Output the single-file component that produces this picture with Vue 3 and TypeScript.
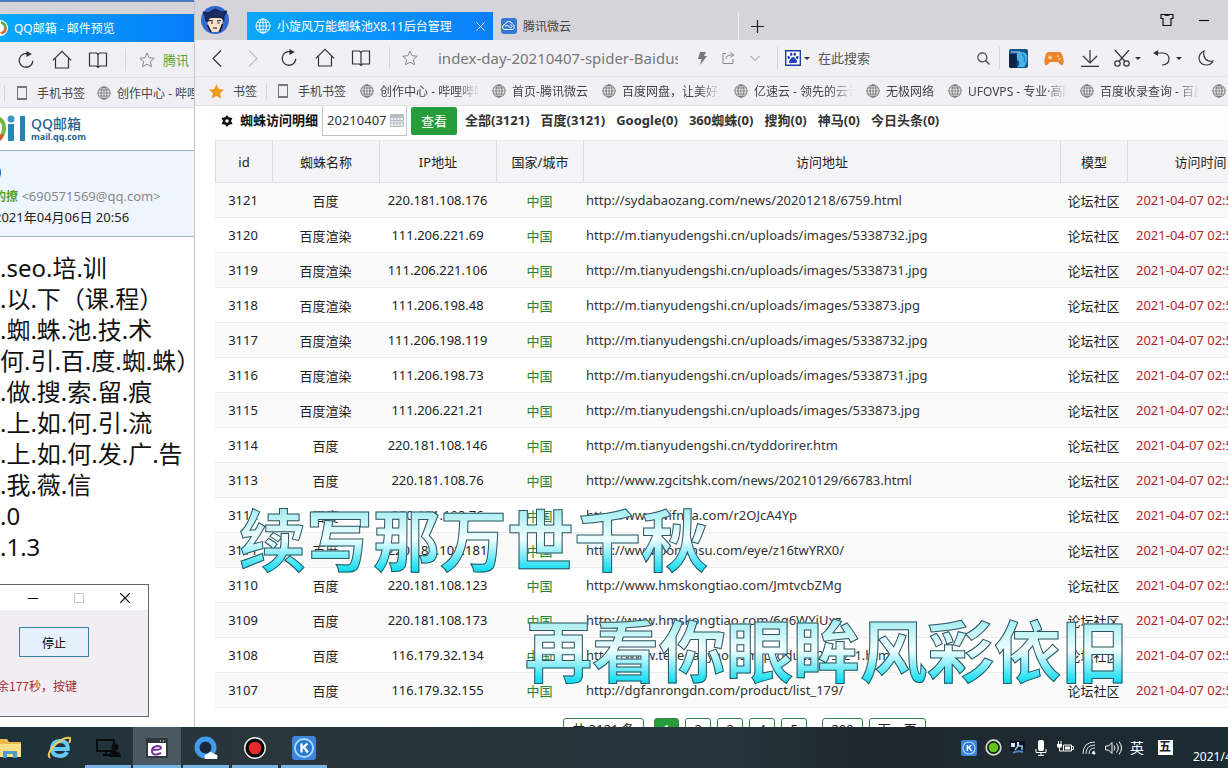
<script setup lang="ts">
import { ref } from 'vue'

interface Visit {
  id: number
  spider: string
  ip: string
  url: string
}

const visits: Visit[] = [
  { id: 3121, spider: '百度', ip: '220.181.108.176', url: 'http://sydabaozang.com/news/20201218/6759.html' },
  { id: 3120, spider: '百度渲染', ip: '111.206.221.69', url: 'http://m.tianyudengshi.cn/uploads/images/5338732.jpg' },
  { id: 3119, spider: '百度渲染', ip: '111.206.221.106', url: 'http://m.tianyudengshi.cn/uploads/images/5338731.jpg' },
  { id: 3118, spider: '百度渲染', ip: '111.206.198.48', url: 'http://m.tianyudengshi.cn/uploads/images/533873.jpg' },
  { id: 3117, spider: '百度渲染', ip: '111.206.198.119', url: 'http://m.tianyudengshi.cn/uploads/images/5338732.jpg' },
  { id: 3116, spider: '百度渲染', ip: '111.206.198.73', url: 'http://m.tianyudengshi.cn/uploads/images/5338731.jpg' },
  { id: 3115, spider: '百度渲染', ip: '111.206.221.21', url: 'http://m.tianyudengshi.cn/uploads/images/533873.jpg' },
  { id: 3114, spider: '百度', ip: '220.181.108.146', url: 'http://m.tianyudengshi.cn/tyddorirer.htm' },
  { id: 3113, spider: '百度', ip: '220.181.108.76', url: 'http://www.zgcitshk.com/news/20210129/66783.html' },
  { id: 3112, spider: '百度', ip: '220.181.108.76', url: 'http://www.wifnaa.com/r2OJcA4Yp' },
  { id: 3111, spider: '百度', ip: '220.181.108.181', url: 'http://www.bonunsu.com/eye/z16twYRX0/' },
  { id: 3110, spider: '百度', ip: '220.181.108.123', url: 'http://www.hmskongtiao.com/JmtvcbZMg' },
  { id: 3109, spider: '百度', ip: '220.181.108.173', url: 'http://www.hmskongtiao.com/6q6WYiUxz' },
  { id: 3108, spider: '百度', ip: '116.179.32.134', url: 'http://www.tejiegaoyao.com/product/213-2-1.html' },
  { id: 3107, spider: '百度', ip: '116.179.32.155', url: 'http://dgfanrongdn.com/product/list_179/' },
]

const filters = ['全部(3121)', '百度(3121)', 'Google(0)', '360蜘蛛(0)', '搜狗(0)', '神马(0)', '今日头条(0)']
const bookmarks = ['创作中心 - 哔哩哔哩', '首页-腾讯微云', '百度网盘，让美好生活', '亿速云 - 领先的云计算', '无极网络', 'UFOVPS - 专业·高防', '百度收录查询 - 百度', '站长']
const mailLines = ['.seo.培.训', '.以.下（课.程）', '.蜘.蛛.池.技.术', '何.引.百.度.蜘.蛛）', '.做.搜.索.留.痕', '.上.如.何.引.流', '.上.如.何.发.广.告', '.我.薇.信', '.0', '.1.3']
const pages = ['2', '3', '4', '5']
const day = ref('20210407')
</script>

<template>
  <div class="desktop">
    <svg class="defs" aria-hidden="true">
      <symbol id="i-globe" viewBox="0 0 16 16"><g fill="none" stroke="currentColor"><circle cx="8" cy="8" r="7" /><ellipse cx="8" cy="8" rx="3.4" ry="7" /><path d="M8 1v14M1 8h14M2 4.6h12M2 11.4h12" stroke-width=".8" /></g></symbol>
      <symbol id="i-reload" viewBox="0 0 20 20"><path d="M11.5 3A7.6 7.6 0 1 0 17.6 11" fill="none" stroke="currentColor" stroke-width="1.4" /><path d="M10.5 0l6 3.2-6 3.4z" fill="currentColor" /></symbol>
      <symbol id="i-home" viewBox="0 0 20 20"><path d="M.8 10.4L10 1.4l9.200 9M3.500 8.500V18h13V8.500" fill="none" stroke="currentColor" stroke-width="1.200" /></symbol>
      <symbol id="i-book" viewBox="0 0 20 20"><path d="M10 4.500L8.500 3H1.500v13h7L10 17.500l1.500-1.500h7V3h-7zM10 4.500v13" fill="none" stroke="currentColor" stroke-width="1.200" /></symbol>
      <symbol id="i-star" viewBox="0 0 16 16"><path d="M8 1l2.100 4.700 5.100.6-3.800 3.400 1.100 5L8 12.200l-4.500 2.500 1.100-5L.8 6.300l5.100-.6z" /></symbol>
      <symbol id="i-k" viewBox="0 0 24 24"><rect width="24" height="24" rx="3" fill="#3d84dc" /><circle cx="12" cy="12" r="9" fill="#2b76d2" stroke="#a8dcff" stroke-width="1.800" /><path d="M9.500 7.500v9M15.500 7.500L10 12.300M11.800 11l4 5.500" fill="none" stroke="#fff" stroke-width="2.300" /></symbol>
    </svg>

    <div class="workspace">
      <section class="mail">
        <div class="mail-strip"></div>
        <div class="mail-tab">
          <svg width="9" height="16" viewBox="0 0 9 16"><circle cx="0" cy="8" r="8" fill="#fff" /><path d="M1 1a7 7 0 0 1 6 7H4a4 4 0 0 0-3-4z" fill="#59b14c" /><path d="M4 8h3a7 7 0 0 1-5 6.500L0 12a4 4 0 0 0 4-4z" fill="#e3662c" /></svg>
          <span>QQ邮箱 - 邮件预览</span>
        </div>
        <div class="mail-tools">
          <button class="tool" aria-label="刷新"><svg width="18" height="18"><use href="#i-reload" /></svg></button>
          <button class="tool" aria-label="主页"><svg width="20" height="20"><use href="#i-home" /></svg></button>
          <button class="tool" aria-label="阅读"><svg width="20" height="20"><use href="#i-book" /></svg></button>
          <i class="rule mail-rule"></i>
          <svg class="outline-star" width="16" height="16"><use href="#i-star" /></svg>
          <span class="green-text">腾讯</span>
        </div>
        <div class="mail-marks">
          <i class="rule short"></i>
          <a href="#" class="mark"><i class="phone"></i><span>手机书签</span></a>
          <a href="#" class="mark"><svg class="globe" width="14" height="14"><use href="#i-globe" /></svg><span>创作中心 - 哔哩</span></a>
        </div>
        <div class="mail-logo">
          <svg width="26" height="29" viewBox="0 0 26 29"><path d="M0 2q6 3 6 11T0 25v-5q2-3 2-7T0 7z" fill="#74b83f" /><path d="M0 20l4-1q-1 5-4 7z" fill="#d9562b" /><circle cx="11" cy="4" r="3.500" fill="#3999c4" /><path d="M8 9h6v17H8z" fill="#2886b4" /><path d="M20 1h5v25h-5z" fill="#2783b1" /></svg>
          <div class="logo-words"><strong>QQ邮箱</strong><small>mail.qq.com</small></div>
        </div>
        <div class="mail-head">
          <h2>0</h2>
          <p class="from"><b>的撩</b> &lt;690571569@qq.com&gt;</p>
          <p>2021年04月06日 20:56</p>
        </div>
        <div class="mail-body"><p v-for="(line, i) in mailLines" :key="i">{{ line }}</p></div>
        <div class="dialog">
          <div class="dialog-bar">
            <svg width="10" height="10" viewBox="0 0 10 10"><path d="M0 5.500h10" stroke="#000" /></svg>
            <svg width="10" height="10" viewBox="0 0 10 10"><path d="M.5.5h9v9h-9z" fill="none" stroke="#c5c5c5" /></svg>
            <svg width="10" height="10" viewBox="0 0 10 10"><path d="M0 0l10 10M10 0L0 10" stroke="#000" stroke-width="1.200" /></svg>
          </div>
          <button class="stop">停止</button>
          <p>余177秒，按键</p>
        </div>
      </section>

      <main class="browser">
        <header class="tabs">
          <svg class="avatar" width="28" height="28" viewBox="0 0 28 28"><circle cx="14" cy="14" r="14" fill="#3467cf" /><path d="M6 12h16l-1 9-4 5h-6l-4-5z" fill="#f7dfcd" /><path d="M2 6l5 1 7-4 7 3 5-1-3 5v5l-2-3-7-1-6 1-1 4-2-1-1-5z" fill="#1d2b62" stroke="#0d132d" stroke-width=".8" /><path d="M8 14.500l4 .5M16 15l4-.5M10 17h2M16.500 17h2M12 22h4" stroke="#17131a" stroke-width="1.200" /><path d="M6.500 19l3.500 7M21.500 18l-3 8" stroke="#10121c" stroke-width="1.500" /></svg>
          <div class="tab active">
            <svg width="16" height="16"><use href="#i-globe" /></svg>
            <span>小旋风万能蜘蛛池X8.11后台管理</span>
            <button aria-label="关闭标签"><svg width="9" height="9" viewBox="0 0 9 9"><path d="M.5.5l8 8M8.500.5l-8 8" stroke="#fff" /></svg></button>
          </div>
          <div class="tab">
            <svg width="16" height="16" viewBox="0 0 16 16"><rect width="16" height="16" rx="3" fill="#3578d3" /><path d="M4 11.500a2.500 2.500 0 0 1 0-5 4 4 0 0 1 7.500-.5 3 3 0 0 1 0 5.500zM4 8c3-1 4 0 4.500 1.500A1.500 1.500 0 1 0 9 7" fill="none" stroke="#fff" /></svg>
            <span>腾讯微云</span>
          </div>
          <button class="tool new-tab" aria-label="新标签"><svg width="13" height="13" viewBox="0 0 13 13"><path d="M6.500 0v13M0 6.500h13" stroke="#222" stroke-width="1.200" /></svg></button>
          <div class="window-keys">
            <svg width="14" height="14" viewBox="0 0 14 14"><path d="M1 1.500h3q3 2 6 0h3v4h-2v7H3v-7H1zM4 1.500h6" fill="none" stroke="#111" stroke-width="1.200" /></svg>
            <svg width="10" height="14" viewBox="0 0 10 14"><path d="M0 7.500h10" stroke="#111" stroke-width="1.200" /></svg>
          </div>
        </header>

        <nav class="toolbar">
          <button class="tool" aria-label="后退"><svg width="10" height="17" viewBox="0 0 10 17"><path d="M9 .5L1 8.500l8 8" fill="none" stroke="currentColor" stroke-width="1.200" /></svg></button>
          <button class="tool faint" aria-label="前进"><svg width="10" height="17" viewBox="0 0 10 17"><path d="M1 .5l8 8-8 8" fill="none" stroke="currentColor" stroke-width="1.200" /></svg></button>
          <button class="tool" aria-label="刷新"><svg width="18" height="18"><use href="#i-reload" /></svg></button>
          <button class="tool" aria-label="主页"><svg width="20" height="20"><use href="#i-home" /></svg></button>
          <button class="tool" aria-label="阅读"><svg width="20" height="20"><use href="#i-book" /></svg></button>
          <i class="rule bar-rule"></i>
          <div class="address">
            <svg class="outline-star" width="16" height="16"><use href="#i-star" /></svg>
            <span class="location">index-day-20210407-spider-Baiduspider</span>
            <svg width="9" height="13" viewBox="0 0 9 13"><path d="M2 0h6L6 4h3L2 13l1.500-6H0z" fill="#777" /></svg>
            <svg width="13" height="12" viewBox="0 0 13 12"><path d="M4 1.500H1v10h10V7M4 7q0-4 5-4h2M8.500.5L12 3 8.500 5.500" fill="none" stroke="#888" /></svg>
            <svg width="10" height="7" viewBox="0 0 10 7"><path d="M.5 1L5 5.500 9.500 1" fill="none" stroke="#888" /></svg>
          </div>
          <div class="search">
            <svg width="16" height="16" viewBox="0 0 16 16"><path d="M.7.7h14.600v14.600H.7z" fill="#fff" stroke="#1d3c9e" stroke-width="1.400" /><g fill="#1b43c0"><ellipse cx="3.700" cy="7.500" rx="1.200" ry="1.700" /><ellipse cx="6.200" cy="4.300" rx="1.200" ry="1.700" /><ellipse cx="9.700" cy="4.300" rx="1.200" ry="1.700" /><ellipse cx="12.300" cy="7.500" rx="1.200" ry="1.700" /><path d="M8 7q1.500 0 2.500 2 2 1.500 1.500 3-.8 1.500-2.500 1h-3Q4 13.500 4 12q0-1.500 1.500-3Q6.500 7 8 7z" /></g></svg>
            <i class="caret"></i>
            <input aria-label="搜索" placeholder="在此搜索" />
            <svg width="13" height="13" viewBox="0 0 13 13"><path d="M8.500 8.500l4 4" stroke="#444" stroke-width="1.200" /><circle cx="5.300" cy="5.300" r="4.500" fill="none" stroke="#444" stroke-width="1.200" /></svg>
          </div>
          <button class="tool" aria-label="图片"><svg width="19" height="19" viewBox="0 0 19 19"><rect width="19" height="19" rx="2" fill="#10538c" /><path d="M0 5h8v14H2q-2 0-2-2z" fill="#0b2443" /><path d="M8 4q7-3 10 2 1 8-3 12H8q3-2 2-6-3 0-2-8z" fill="#48b4e8" /><path d="M13 5q4 3 2 8" fill="none" stroke="#1d7fc0" stroke-width="1.500" /><path d="M2 3h9" stroke="#bde5f7" /></svg></button>
          <button class="tool" aria-label="游戏"><svg width="20" height="15" viewBox="0 0 20 15"><path d="M5 1h10q3 0 4 5 1.500 6-.5 8-2 1-4.500-3H6q-2.500 4-4.500 3-2-2-.5-8 1-5 4-5z" fill="#ef8430" /><path d="M4 6.500h4M6 4.500v4M13 5h2M14.500 8h2" stroke="#ffe0a4" stroke-width="1.300" /></svg></button>
          <button class="tool" aria-label="下载"><svg width="18" height="17" viewBox="0 0 18 17"><path d="M9 0v13M2 6l7 7 7-7M0 16.300h18" fill="none" stroke="currentColor" stroke-width="1.200" /></svg></button>
          <button class="tool menu" aria-label="截图"><svg width="16" height="17" viewBox="0 0 16 17"><g fill="none" stroke="currentColor" stroke-width="1.200"><path d="M1 0l10 11.500M15 0L5 11.500" /><circle cx="3.500" cy="13.500" r="2.700" /><circle cx="12.500" cy="13.500" r="2.700" /></g></svg><i class="caret"></i></button>
          <button class="tool menu wide" aria-label="恢复"><svg width="17" height="16" viewBox="0 0 17 16"><path d="M3 3h7q6 .5 6 6t-7 6" fill="none" stroke="currentColor" stroke-width="1.200" /><path d="M5 0v6L0 3z" fill="currentColor" /></svg><i class="caret"></i></button>
          <button class="tool" aria-label="夜间"><svg width="16" height="16" viewBox="0 0 16 16"><path d="M6 1Q1 3.500 1 8.500 2 15 8.500 15q4.500 0 6.500-4Q10 12 7.500 9T6 1z" fill="none" stroke="currentColor" stroke-width="1.200" /></svg></button>
        </nav>

        <nav class="bookmarks">
          <a href="#" class="mark first"><svg width="17" height="17" fill="#f09a20"><use href="#i-star" /></svg><span>书签</span></a>
          <i class="rule short"></i>
          <a href="#" class="mark"><i class="phone"></i><span>手机书签</span></a>
          <a v-for="name in bookmarks" :key="name" href="#" class="mark"><svg class="globe" width="14" height="14"><use href="#i-globe" /></svg><span class="fade">{{ name }}</span></a>
        </nav>

        <section class="page">
          <form class="filter" @submit.prevent>
            <svg width="12" height="12" viewBox="0 0 12 12"><path d="M6 0l1.700 2.300L11.500 3 10 6l1.500 3-3.800.7L6 12 4.300 9.700.5 9 2 6 .5 3l3.800-.7z" fill="#111" /><circle cx="6" cy="6" r="1.800" fill="#fff" /></svg>
            <label for="day">蜘蛛访问明细</label>
            <div class="date">
              <input id="day" v-model="day" />
              <svg width="14" height="13" viewBox="0 0 14 13"><rect width="14" height="13" rx="1" fill="#b8bdc6" /><path d="M1 4h12v8H1z" fill="#eef0f3" /><path d="M1 6.500h12M1 9h12M4 4v8M7 4v8M10 4v8" stroke="#b5bac4" /></svg>
            </div>
            <button class="view">查看</button>
            <a v-for="item in filters" :key="item" href="#">{{ item }}</a>
          </form>
          <div class="sheet">
            <table>
              <colgroup><col class="c-id" /><col class="c-name" /><col class="c-ip" /><col class="c-area" /><col /><col class="c-type" /><col class="c-time" /></colgroup>
              <thead><tr><th>id</th><th>蜘蛛名称</th><th>IP地址</th><th>国家/城市</th><th>访问地址</th><th>模型</th><th>访问时间</th></tr></thead>
              <tbody>
                <tr v-for="v in visits" :key="v.id">
                  <td>{{ v.id }}</td><td>{{ v.spider }}</td><td>{{ v.ip }}</td><td class="area">中国</td><td class="url">{{ v.url }}</td><td class="kind">论坛社区</td><td class="time">2021-04-07 02:56:11</td>
                </tr>
              </tbody>
            </table>
            <nav class="pager">
              <span class="total">共 3121 条</span><a href="#" class="current">1</a><a v-for="p in pages" :key="p" href="#">{{ p }}</a><a href="#" class="last">209</a><a href="#">下一页</a>
            </nav>
          </div>
        </section>
      </main>

      <p class="lyric one">续写那万世千秋</p>
      <p class="lyric two">再看你眼眸风彩依旧</p>
    </div>

    <footer class="taskbar">
      <button class="app" aria-label="文件夹"><svg width="24" height="22" viewBox="0 0 24 22"><path d="M0 2h9l2 3h12v15H0z" fill="#e9b94b" /><path d="M0 7h23v13H0z" fill="#ffdf86" /><path d="M5 21v-7h14v7h-4v-4H9v4z" fill="#4f9bc4" /></svg></button>
      <button class="app" aria-label="IE"><svg width="24" height="24" viewBox="0 0 24 24"><path d="M5.500 13h15.200q.3-8-7.700-8-8 .4-8 8 .3 7 8 7 5 0 7-4" fill="none" stroke="#68c9f3" stroke-width="4" /><path d="M3 22Q-1 18 8 9T23 2q1 2-1 5" fill="none" stroke="#f2cf54" stroke-width="2" /></svg></button>
      <button class="app running" aria-label="远程"><svg width="25" height="20" viewBox="0 0 25 20"><path d="M1 2h17v11H1zM7 17h7M10 13v4" fill="none" stroke="#080b0d" stroke-width="2" /><circle cx="19" cy="9" r="3.500" fill="#080b0d" /><path d="M13 19q0-6 6-6t6 6z" fill="#080b0d" /></svg></button>
      <button class="app running chosen" aria-label="易语言"><svg width="22" height="20" viewBox="0 0 22 20"><path d="M1 1h20v18H1z" fill="#fff" stroke="#31383c" stroke-width="2" /><path d="M1 1h20v4H1z" fill="#31383c" /><path d="M14 3h1M17 3h1" stroke="#fff" /><path d="M7 11.500q7 1 8-1.500 0-2-4-2-5 1-5 5 0 4 5 3.500l4-1.500" fill="none" stroke="#783391" stroke-width="2" /></svg></button>
      <button class="app running" aria-label="QQ浏览器"><svg width="24" height="24" viewBox="0 0 24 24"><circle cx="11.500" cy="11.500" r="8.500" fill="#18283f" stroke="#419ced" stroke-width="5" /><path d="M11 23q-2-5 3-5 2-4 6 0 5 0 3 5z" fill="#fff" /></svg></button>
      <button class="app running" aria-label="录制"><svg width="24" height="24" viewBox="0 0 24 24"><circle cx="12" cy="12" r="10.300" fill="#0b0708" stroke="#eee" stroke-width="1.400" /><circle cx="12" cy="12" r="6.300" fill="#e92b2c" /></svg></button>
      <button class="app running" aria-label="酷狗"><svg width="24" height="24"><use href="#i-k" /></svg></button>
      <div class="tray">
        <span><svg width="16" height="16"><use href="#i-k" /></svg></span>
        <span><svg width="17" height="17" viewBox="0 0 17 17"><circle cx="8.500" cy="8.500" r="7.300" fill="#102010" stroke="#d7dbd7" stroke-width="1.700" /><circle cx="8.500" cy="8.500" r="4.800" fill="#61c51d" /></svg></span>
        <span><svg width="15" height="14" viewBox="0 0 15 14"><path d="M0 0h15v10H0z" fill="#0c1524" /><path d="M1 2h4v4H1zM7 1h2v5H7z" fill="#dce8f4" /><path d="M5 9l3-4h4v4" stroke="#9cc5e8" fill="none" stroke-width="1.500" /><path d="M3 12q5-3 10-1" stroke="#4887c6" stroke-width="2" fill="none" /></svg></span>
        <span><svg width="12" height="16" viewBox="0 0 12 16"><rect x="3" width="6" height="11" rx="2" fill="#fff" /><path d="M1 9v3.500h10V9M6 12v3.500M3 15.300h6" fill="none" stroke="#fff" /></svg></span>
        <span><svg width="17" height="13" viewBox="0 0 17 13"><path d="M6.500 4h8v6h-8zM15 5.500h1.500v3H15" fill="none" stroke="#fff" /><path d="M8 5.500h5v3H8zM0 3h5v2q0 2-2.500 2T0 5zM1 0h1v3H1zM3.500 0h1v3h-1z" fill="#fff" /><path d="M2.500 7v3H6" fill="none" stroke="#fff" /></svg></span>
        <span><svg width="14" height="14" viewBox="0 0 14 14"><path d="M1 13Q1 1 13 1M4 13q0-9 9-9M7 13q0-6 6-6M10 13q0-3 3-3" fill="none" stroke="#dce3e6" /><circle cx="12" cy="12.300" r="1.300" fill="#fff" /></svg></span>
        <span><svg width="17" height="14" viewBox="0 0 17 14"><path d="M.5 5h3L7 1.500v11L3.500 9h-3zM9 4.500q2 2.500 0 5M11.500 2.500q3.500 4.500 0 9M14 .5q5 6.500 0 13" fill="none" stroke="#fff" /></svg></span>
        <span>英</span>
        <span class="wubi"><b>五</b></span>
        <time>2021/4/7</time>
      </div>
    </footer>
  </div>
</template>

<style>
html, body { margin: 0; overflow: hidden; }
</style>

<style scoped>
* { box-sizing: border-box; }
.desktop { height: 100vh; display: flex; flex-direction: column; overflow: hidden; font-family: "Noto Sans", "Noto Sans CJK SC", sans-serif; font-size: 13px; color: #222; background: #fff; }
.defs { position: absolute; width: 0; height: 0; }
p, h2 { margin: 0; }
svg { display: block; flex: none; }
a { color: inherit; text-decoration: none; }
button { font: inherit; color: inherit; border: 0; padding: 0; background: none; }
input { font: inherit; color: inherit; border: 0; padding: 0; background: none; outline: 0; min-width: 0; }
.workspace { position: relative; flex: 1; min-height: 0; display: flex; overflow: hidden; }

.mail { position: relative; flex: 0 0 194px; overflow: hidden; white-space: nowrap; }
.mail-strip { height: 14px; background: #d4d4da; border-top: 2px solid #4779b3; }
.mail-tab { height: 28px; display: flex; align-items: center; gap: 5px; color: #fff; font-size: 12px; background: linear-gradient(90deg, #05a9fb, #087cfa); }
.mail-tools { height: 36px; padding-left: 8px; display: flex; align-items: center; background: #f0f0f4; border-bottom: 1px solid #e2e2e6; }
.rule { flex: none; width: 1px; height: 22px; background: #d3d3d8; }
.rule.short { height: 16px; }
.mail-rule { margin: 0 13px 0 9px; }
.green-text { color: #56a832; margin-left: 8px; }
.mail-marks { height: 30px; padding-left: 4px; display: flex; align-items: center; gap: 12px; background: #f0f0f4; border-bottom: 1px solid #dedee4; font-size: 12px; color: #444; }
.mail-logo { height: 42px; display: flex; align-items: center; gap: 5px; }
.logo-words { display: flex; flex-direction: column; color: #1c6692; }
.logo-words strong { font-size: 14px; line-height: 15px; font-weight: 500; }
.logo-words small { font-size: 9px; line-height: 11px; font-weight: 700; }
.mail-head { height: 87px; padding-top: 7px; background: #eef5fd; border-top: 1px solid #9fb3c6; border-bottom: 1px solid #9fb3c6; }
.mail-head h2 { margin-left: -9px; font-size: 18px; line-height: 28px; color: #111; }
.mail-head p { margin-left: -6px; line-height: 20px; font-size: 13px; color: #222; }
.mail-head .from { color: #888; }
.mail-head b { color: #58a025; font-size: 12px; }
.mail-body { padding-top: 15px; font-size: 24px; line-height: 31px; color: #111; }
.dialog { position: absolute; left: -1px; top: 584px; width: 150px; height: 133px; border: 1px solid #666; background: #f0eef2; font-family: "Noto Sans CJK SC", sans-serif; font-size: 12px; }
.dialog-bar { height: 25px; padding-right: 18px; display: flex; justify-content: flex-end; align-items: center; gap: 36px; background: #fff; }
.stop { display: block; width: 70px; height: 30px; margin: 17px 0 19px 19px; border: 1px solid #3c7f9f; background: #e5f1fc; color: #000; }
.dialog p { line-height: 20px; margin-left: -3px; color: #a82b30; }

.browser { flex: 1; min-width: 0; overflow: hidden; display: flex; flex-direction: column; border-left: 1px solid #c4c4ca; background: #fff; }
.tabs { flex: none; height: 40px; padding-left: 6px; display: flex; align-items: flex-end; background: #d5d4da; font-size: 12px; color: #444; }
.avatar { margin: 0 18px 6px 0; }
.tab { flex: none; width: 246px; height: 28px; padding: 0 8px; display: flex; align-items: center; gap: 6px; border-right: 1px solid #efeff2; }
.tab.active { color: #fff; border: 0; background: linear-gradient(90deg, #0aa8fa, #0a7ff8); }
.tab button { margin-left: auto; }
.new-tab { height: 28px; }
.window-keys { margin: 0 19px 13px auto; display: flex; gap: 25px; }
.toolbar { flex: none; height: 37px; padding: 0 4px; display: flex; align-items: center; background: #f1f1f5; border-bottom: 1px solid #e3e3e8; }
.tool { flex: none; width: 36px; display: flex; align-items: center; justify-content: center; color: #333; }
.faint { color: #bcbcc0; }
.menu { width: 38px; gap: 5px; }
.menu.wide { width: 42px; gap: 6px; }
.caret { flex: none; border: 3px solid transparent; border-top-color: #333; border-bottom: 0; }
.bar-rule { margin: 0 12px 0 10px; }
.address { flex: 1; min-width: 0; display: flex; align-items: center; gap: 15px; padding-right: 17px; border-right: 1px solid #d3d3d8; }
.outline-star { fill: none; stroke: #888; }
.location { flex: 1; min-width: 0; margin: 0 5px; overflow: hidden; white-space: nowrap; font-size: 15px; line-height: 22px; color: #777; }
.search { flex: 0 0 222px; min-width: 0; height: 22px; padding: 0 9px 0 7px; display: flex; align-items: center; gap: 3px; border-right: 1px solid #d3d3d8; }
.search input { flex: 1; width: 0; margin-left: 5px; }
.search input::placeholder { color: #555; opacity: 1; }
.bookmarks { flex: none; height: 29px; padding-left: 13px; display: flex; align-items: center; gap: 14px; background: #f1f1f5; border-bottom: 1px solid #e0e0e5; font-size: 12px; color: #444; overflow: hidden; }
.bookmarks .short { margin-right: -3px; }
.mark { flex: none; display: flex; align-items: center; gap: 6px; white-space: nowrap; }
.first { gap: 8px; margin-right: -5px; }
.phone { width: 10px; height: 14px; margin-right: 4px; border: 1px solid #777; border-top-width: 2px; border-bottom-width: 2px; }
.globe { color: #666; }
.fade { max-width: 98px; overflow: hidden; mask-image: linear-gradient(90deg, #000 76px, transparent 100px); }

.page { flex: 1; min-height: 0; padding-left: 20px; overflow: hidden; }
.filter { height: 34px; padding: 0 0 5px 6px; display: flex; align-items: center; gap: 8px; font-weight: 700; white-space: nowrap; color: #333; background: #fdfdfd; }
.filter label { margin-right: -4px; margin-left: -1px; color: #111; }
.filter label, .filter a { padding-bottom: 2px; }
.filter a + a { margin-left: 3px; }
.date { width: 85px; height: 30px; padding: 0 2px 0 4px; display: flex; align-items: center; border: 1px solid #c5c5c5; border-top: 0; background: #fff; font-weight: 400; }
.date input { flex: 1; width: 60px; }
.view { width: 46px; height: 28px; margin-left: -4px; border-radius: 2px; color: #fff; background: #279c3b; font-weight: 400; }
.sheet { width: calc(100% + 46px); }
table { width: 100%; table-layout: fixed; border-collapse: separate; border-spacing: 0; }
.c-id { width: 58px; }
.c-name { width: 107px; }
.c-ip { width: 117px; }
.c-area { width: 87px; }
.c-type { width: 67px; }
.c-time { width: 146px; }
th { height: 43px; padding: 0; font-weight: 400; color: #222; background: #f4f4f6; border-right: 1px solid #dcdcdf; border-bottom: 1px solid #e2e2e5; border-top: 1px solid #ececef; }
th:first-child { border-left: 1px solid #dcdcdf; }
td { height: 35px; padding: 0 2px 0 0; text-align: center; white-space: nowrap; border-bottom: 1px solid #ececee; }
tbody tr:nth-child(odd) { background: #fafafb; }
.area { color: #23862b; }
.url { text-align: left; padding-left: 2px; color: #333; }
.time { text-align: left; padding-left: 8px; color: #b0252c; }
.pager { padding-top: 10px; display: flex; justify-content: center; gap: 6px; }
.pager > * { min-width: 26px; height: 26px; padding: 0 8px; line-height: 20px; text-align: center; border: 1px solid #39804a; border-radius: 3px; }
.pager .total { margin-right: 4px; }
.pager .current { min-width: 24px; color: #fff; background: #279c3b; }
.pager .last { margin-left: 9px; }

.lyric { position: absolute; font-family: "Noto Sans CJK SC", sans-serif; font-weight: 700; font-size: 67px; line-height: 80px; white-space: nowrap; color: transparent; background: linear-gradient(180deg, #a2edf2 12px, #f2feff 42px, #10dcf2 74px); background-clip: text; -webkit-background-clip: text; -webkit-text-stroke: 1px #31545e; }
.one { left: 239px; top: 497px; }
.two { left: 525px; top: 608px; }

.taskbar { flex: none; height: 41px; display: flex; background: linear-gradient(90deg, #1e3139, #2a363c 20%, #26333a 60%, #20282f 70%, #1c2b33); color: #fff; overflow: hidden; }
.app { flex: none; width: 48px; margin-right: 1px; display: flex; align-items: center; justify-content: center; border-bottom: 3px solid transparent; padding-top: 3px; }
.app:first-child { margin-left: -14px; }
.running { border-image: linear-gradient(90deg, transparent 4px, #78b3e6 4px, #78b3e6 44px, transparent 44px) 3; }
.chosen { background: #4b5a62; border-image: none; border-bottom-color: #78b3e6; }
.tray { margin-left: auto; display: flex; align-items: center; white-space: nowrap; }
.tray span { width: 24px; display: flex; justify-content: center; font-size: 14px; line-height: 20px; }
.tray .wubi { width: 32px; }
.wubi b { width: 15px; height: 15px; font-size: 12px; line-height: 14px; text-align: center; background: #fff; color: #1b242a; }
.tray time { width: 35px; margin-left: 12px; padding-top: 18px; font-size: 12px; overflow: hidden; }
</style>
